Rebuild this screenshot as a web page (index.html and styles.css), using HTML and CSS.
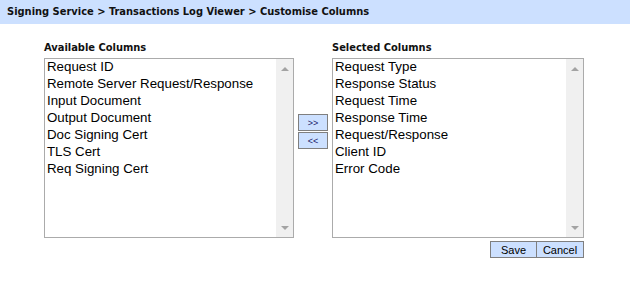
FILE: index.html
```html
<!DOCTYPE html>
<html lang="en">
<head>
  <meta charset="UTF-8">
  <title>Customise Columns</title>
  <link rel="stylesheet" href="styles.css">
</head>
<body>
  <div class="titlebar">Signing Service &gt; Transactions Log Viewer &gt; Customise Columns</div>

  <div class="picker">
    <div class="col">
      <div class="label">Available Columns</div>
      <div class="listbox">
        <div class="items">
          <div>Request ID</div>
          <div>Remote Server Request/Response</div>
          <div>Input Document</div>
          <div>Output Document</div>
          <div>Doc Signing Cert</div>
          <div>TLS Cert</div>
          <div>Req Signing Cert</div>
        </div>
        <div class="scroll"><span class="up"></span><span class="down"></span></div>
      </div>
    </div>

    <div class="moves">
      <button class="btn move">&gt;&gt;</button>
      <button class="btn move">&lt;&lt;</button>
    </div>

    <div class="col right">
      <div class="label">Selected Columns</div>
      <div class="listbox">
        <div class="items">
          <div>Request Type</div>
          <div>Response Status</div>
          <div>Request Time</div>
          <div>Response Time</div>
          <div>Request/Response</div>
          <div>Client ID</div>
          <div>Error Code</div>
        </div>
        <div class="scroll"><span class="up"></span><span class="down"></span></div>
      </div>
      <div class="actions">
        <button class="btn">Save</button><button class="btn">Cancel</button>
      </div>
    </div>
  </div>
</body>
</html>
```

FILE: styles.css
```css
body {
  margin: 0;
  background: #fff;
  font-family: "DejaVu Sans Condensed", "DejaVu Sans", sans-serif;
  color: #000;
}

.titlebar {
  background-color: #cce0ff;
  height: 24px;
  line-height: 24px;
  padding-left: 7px;
  font-size: 11px;
  font-weight: bold;
  color: #111;
}

.picker {
  display: flex;
  align-items: flex-start;
  padding: 17px 0 0 44px;
}

.col {
  width: 250px;
}

.col.right {
  width: 252px;
}

.label {
  font-size: 11px;
  font-weight: bold;
  height: 17px;
  line-height: 13px;
  color: #111;
}

.listbox {
  display: flex;
  height: 178px;
  border: 1px solid #ababab;
}

.items {
  flex: 1;
  padding: 0 0 0 2px;
  margin-top: -1px;
  font-family: "Liberation Sans", Arial, sans-serif;
  font-size: 13.3px;
  line-height: 17px;
}

.scroll {
  width: 17px;
  background: #f0f0f0;
  display: flex;
  flex-direction: column;
  justify-content: space-between;
  align-items: center;
  padding: 8px 0 7px;
}

.up, .down {
  width: 0;
  height: 0;
  border-left: 4px solid transparent;
  border-right: 4px solid transparent;
}

.up {
  border-bottom: 4px solid #a3a3a3;
}

.down {
  border-top: 4px solid #a3a3a3;
}

.moves {
  display: flex;
  flex-direction: column;
  gap: 1px;
  margin: 73px 4px 0;
}

.btn {
  background-color: #cce0ff;
  border: 1px solid #7f7f7f;
  padding: 0;
  margin: 0;
  font-family: "Liberation Sans", Arial, sans-serif;
  font-size: 11px;
  color: #000;
  height: 17px;
  cursor: pointer;
}

.move {
  width: 30px;
  font-size: 9px;
  color: #1a1a6a;
}

.actions {
  display: flex;
  justify-content: flex-end;
  margin-top: 3px;
}

.actions .btn {
  width: 47px;
}

.actions .btn + .btn {
  width: 48px;
  margin-left: -1px;
}
```
